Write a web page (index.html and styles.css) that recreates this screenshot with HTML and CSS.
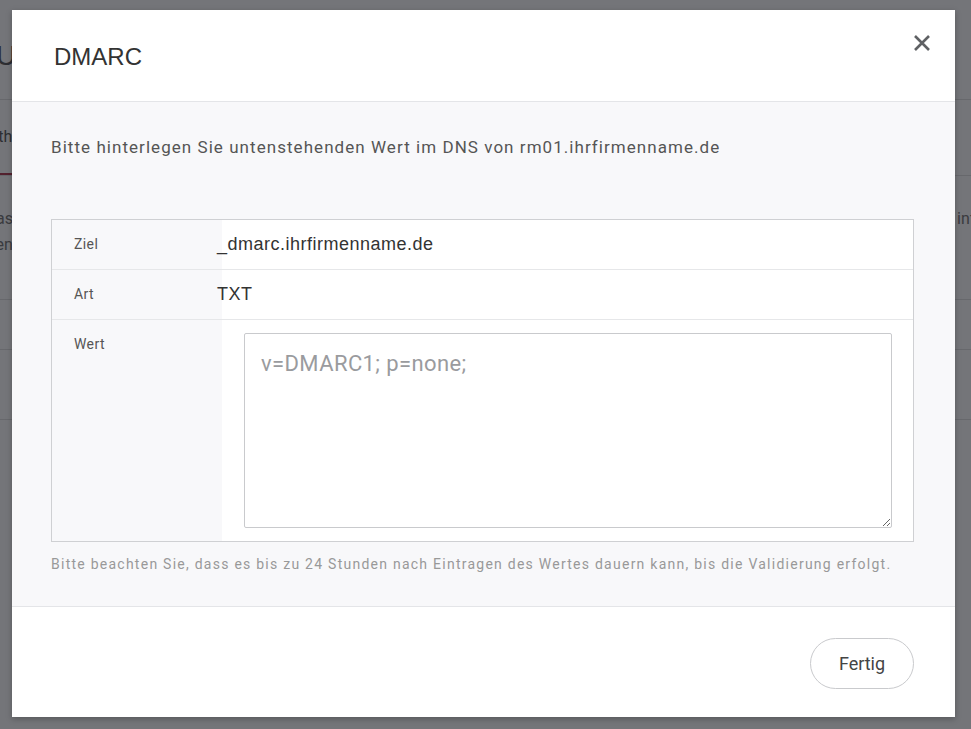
FILE: index.html
```html
<!DOCTYPE html>
<html lang="de">
<head>
    <meta charset="UTF-8">
    <meta name="viewport" content="width=device-width, initial-scale=1.0">
    <title>DMARC</title>
    <link rel="stylesheet" href="styles.css">
</head>
<body>
    <!-- page behind the dialog -->
    <div class="page">
        <div class="page-head">Unternehmen</div>
        <div class="page-tabs">
            <span class="page-tab active">Authentifizierung</span>
        </div>
        <div class="page-row">
            <p>Passwort ändern</p>
            <p>Sender-Domains</p>
            <span class="page-row-side">info</span>
        </div>
        <div class="page-row short"></div>
        <div class="page-row"></div>
    </div>

    <div class="overlay">
        <div class="modal">
            <div class="modal-header">
                <h2 class="modal-title">DMARC</h2>
                <button class="modal-close" aria-label="Schließen">
                    <svg width="18" height="18" viewBox="0 0 18 18">
                        <path d="M2 2 L16 16 M16 2 L2 16" stroke="#5f6164" stroke-width="2.6" stroke-linecap="butt"/>
                    </svg>
                </button>
            </div>

            <div class="modal-body">
                <p class="intro">Bitte hinterlegen Sie untenstehenden Wert im DNS von rm01.ihrfirmenname.de</p>

                <div class="dns-table">
                    <div class="dns-row">
                        <div class="dns-label">Ziel</div>
                        <div class="dns-value">_dmarc.ihrfirmenname.de</div>
                    </div>
                    <div class="dns-row">
                        <div class="dns-label">Art</div>
                        <div class="dns-value">TXT</div>
                    </div>
                    <div class="dns-row dns-row-wide">
                        <div class="dns-label">Wert</div>
                        <div class="dns-value dns-field">
                            <textarea class="dns-textarea" placeholder="v=DMARC1; p=none;"></textarea>
                        </div>
                    </div>
                </div>

                <p class="hint">Bitte beachten Sie, dass es bis zu 24 Stunden nach Eintragen des Wertes dauern kann, bis die Validierung erfolgt.</p>
            </div>

            <div class="modal-footer">
                <button class="btn-done">Fertig</button>
            </div>
        </div>
    </div>
</body>
</html>
```

FILE: styles.css
```css
* {
    margin: 0;
    padding: 0;
    box-sizing: border-box;
}

body {
    font-family: Roboto, "Liberation Sans", Arial, sans-serif;
    background: #fff;
    color: #333;
    width: 971px;
    height: 729px;
    overflow: hidden;
    position: relative;
}

/* background page */
.page {
    padding-top: 40px;
    height: 729px;
    overflow: hidden;
}

.page-head {
    font-family: "Liberation Sans", Arial, sans-serif;
    font-size: 28px;
    color: #444;
    margin-left: -4px;
    height: 60px;
    border-bottom: 1px solid #ddd;
}

.page-tabs {
    height: 76px;
    border-bottom: 1px solid #ddd;
    display: flex;
    align-items: center;
}

.page-tab {
    font-size: 16px;
    color: #444;
    margin-left: -21px;
}

.page-tab.active {
    height: 100%;
    display: flex;
    align-items: center;
    border-bottom: 2px solid #a8223b;
}

.page-row {
    position: relative;
    height: 124px;
    border-bottom: 1px solid #ddd;
    padding-top: 30px;
    font-size: 16px;
    color: #666;
    line-height: 26px;
    margin-left: -14px;
}

.page-row-side {
    position: absolute;
    left: 971px;
    top: 30px;
}

.page-row.short {
    height: 50px;
    margin-left: 0;
}

.page-row:last-child {
    height: 70px;
    margin-left: 0;
}

/* dim layer and dialog */
.overlay {
    position: absolute;
    inset: 0;
    background: rgba(30, 33, 38, 0.62);
    padding: 10px 16px 12px 12px;
}

.modal {
    background: #fff;
    width: 943px;
    height: 707px;
    display: flex;
    flex-direction: column;
    box-shadow: 0 2px 6px rgba(0, 0, 0, 0.25);
}

.modal-header {
    height: 92px;
    display: flex;
    align-items: center;
    justify-content: space-between;
    padding: 0 24px 0 42px;
    border-bottom: 1px solid #e4e5e8;
    flex-shrink: 0;
}

.modal-title {
    font-family: "Liberation Sans", Arial, sans-serif;
    font-weight: 400;
    font-size: 24px;
    color: #333;
    margin-top: 2px;
}

.modal-close {
    background: none;
    border: none;
    cursor: pointer;
    width: 18px;
    height: 18px;
    margin-top: -26px;
}

.modal-body {
    background: #f8f8fa;
    padding: 33px 41px 0 39px;
    height: 505px;
    border-bottom: 1px solid #e4e5e8;
    flex-shrink: 0;
}

.intro {
    font-size: 17px;
    letter-spacing: 1.05px;
    color: #555;
    line-height: 24px;
    margin-bottom: 60px;
}

.dns-table {
    border: 1px solid #cfd0d3;
    background: #fff;
}

.dns-row {
    display: flex;
    height: 50px;
    border-bottom: 1px solid #e6e7e9;
}

.dns-row:last-child {
    border-bottom: none;
}

.dns-row-wide {
    height: 221px;
}

.dns-label {
    width: 170px;
    background: #f8f8fa;
    padding: 16px 0 0 22px;
    font-size: 14px;
    letter-spacing: 0.4px;
    color: #555;
}

.dns-value {
    flex: 1;
    padding: 14px 0 0 0;
    margin-left: -5px;
    font-family: "Liberation Sans", Arial, sans-serif;
    font-size: 18px;
    letter-spacing: 0.5px;
    color: #333;
}

.dns-field {
    margin-left: 0;
    padding: 13px 21px 12px 22px;
}

.dns-textarea {
    width: 100%;
    height: 195px;
    border: 1px solid #c9cacd;
    border-radius: 2px;
    padding: 17px 16px;
    font-family: Roboto, sans-serif;
    font-size: 22px;
    letter-spacing: 0.4px;
    color: #333;
    resize: vertical;
    outline: none;
}

.dns-textarea::placeholder {
    color: #9a9b9e;
}

.hint {
    font-size: 14px;
    letter-spacing: 1.25px;
    color: #999;
    margin-top: 14px;
}

.modal-footer {
    flex: 1;
    background: #fff;
    display: flex;
    justify-content: flex-end;
    align-items: flex-start;
    padding: 31px 41px 0 0;
}

.btn-done {
    width: 104px;
    height: 51px;
    border-radius: 26px;
    border: 1px solid #c9cacd;
    background: #fff;
    font-family: Roboto, sans-serif;
    font-size: 18px;
    color: #444;
    cursor: pointer;
}
```
